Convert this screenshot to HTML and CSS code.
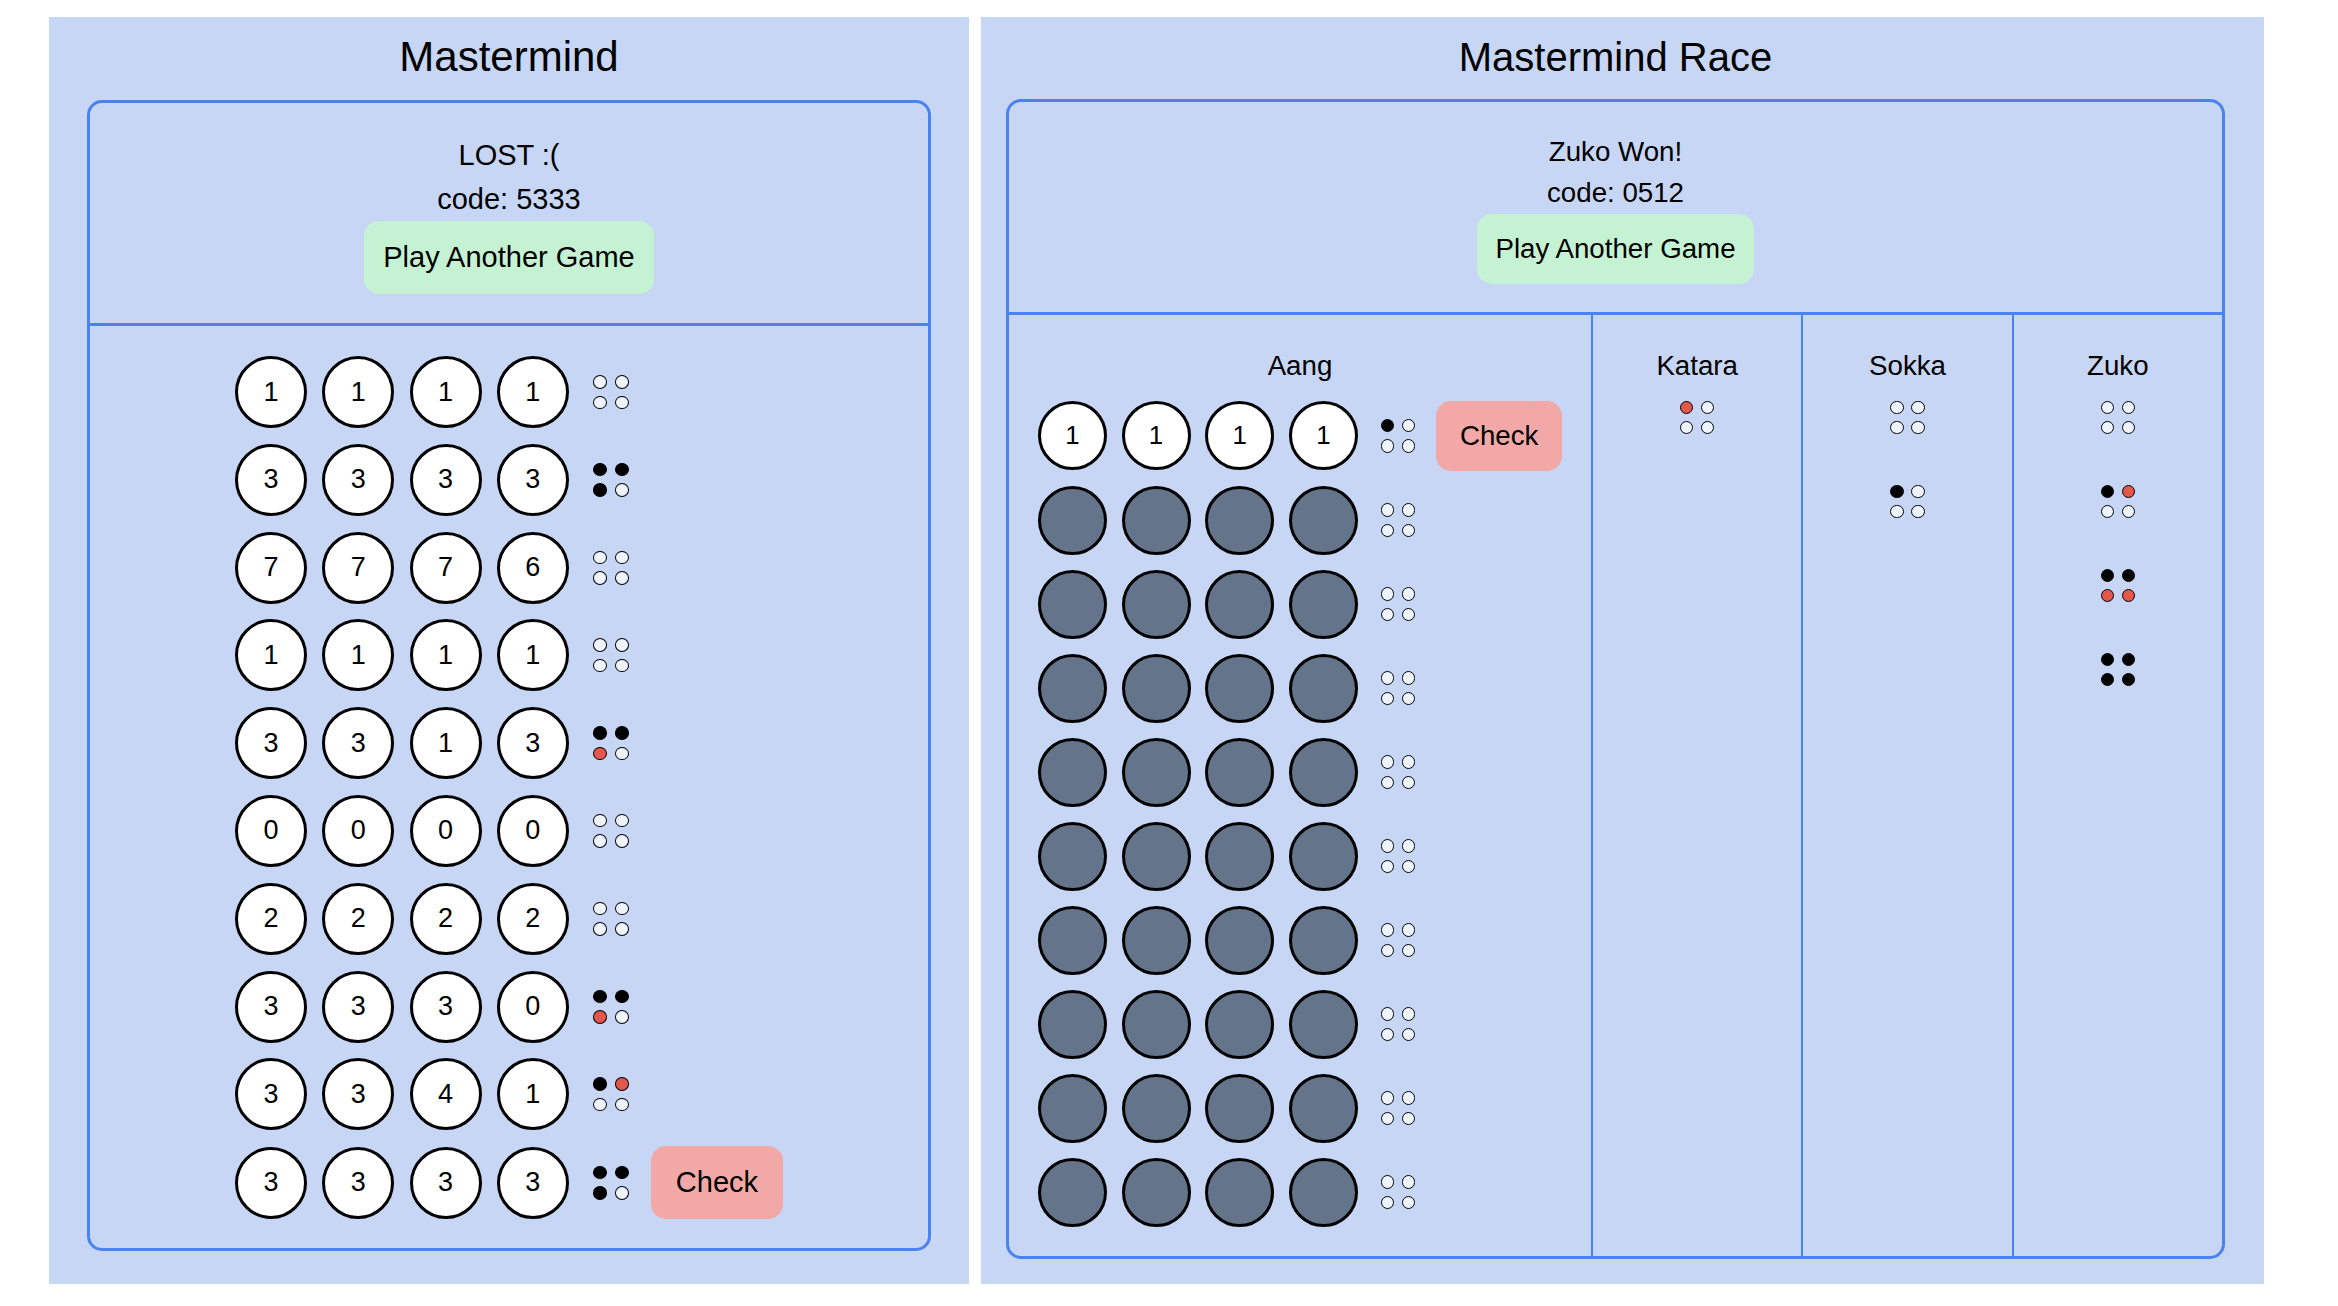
FILE: index.html
```html
<!DOCTYPE html>
<html lang="en">
<head>
<meta charset="utf-8">
<title>Mastermind</title>
<link rel="stylesheet" href="styles.css">
</head>
<body>
<div class="page">
  <section class="panel panel-left">
    <h1 class="title">Mastermind</h1>
    <div class="game">
      <div class="game-head">
        <div>LOST :(</div>
        <div>code: 5333</div>
        <button class="btn btn-green">Play Another Game</button>
      </div>
      <div class="board">
        <div class="row"><div class="pins"><span class="pin">1</span><span class="pin">1</span><span class="pin">1</span><span class="pin">1</span></div><div class="pegs"><i class="peg"></i><i class="peg"></i><i class="peg"></i><i class="peg"></i></div></div>
        <div class="row"><div class="pins"><span class="pin">3</span><span class="pin">3</span><span class="pin">3</span><span class="pin">3</span></div><div class="pegs"><i class="peg b"></i><i class="peg b"></i><i class="peg b"></i><i class="peg"></i></div></div>
        <div class="row"><div class="pins"><span class="pin">7</span><span class="pin">7</span><span class="pin">7</span><span class="pin">6</span></div><div class="pegs"><i class="peg"></i><i class="peg"></i><i class="peg"></i><i class="peg"></i></div></div>
        <div class="row"><div class="pins"><span class="pin">1</span><span class="pin">1</span><span class="pin">1</span><span class="pin">1</span></div><div class="pegs"><i class="peg"></i><i class="peg"></i><i class="peg"></i><i class="peg"></i></div></div>
        <div class="row"><div class="pins"><span class="pin">3</span><span class="pin">3</span><span class="pin">1</span><span class="pin">3</span></div><div class="pegs"><i class="peg b"></i><i class="peg b"></i><i class="peg r"></i><i class="peg"></i></div></div>
        <div class="row"><div class="pins"><span class="pin">0</span><span class="pin">0</span><span class="pin">0</span><span class="pin">0</span></div><div class="pegs"><i class="peg"></i><i class="peg"></i><i class="peg"></i><i class="peg"></i></div></div>
        <div class="row"><div class="pins"><span class="pin">2</span><span class="pin">2</span><span class="pin">2</span><span class="pin">2</span></div><div class="pegs"><i class="peg"></i><i class="peg"></i><i class="peg"></i><i class="peg"></i></div></div>
        <div class="row"><div class="pins"><span class="pin">3</span><span class="pin">3</span><span class="pin">3</span><span class="pin">0</span></div><div class="pegs"><i class="peg b"></i><i class="peg b"></i><i class="peg r"></i><i class="peg"></i></div></div>
        <div class="row"><div class="pins"><span class="pin">3</span><span class="pin">3</span><span class="pin">4</span><span class="pin">1</span></div><div class="pegs"><i class="peg b"></i><i class="peg r"></i><i class="peg"></i><i class="peg"></i></div></div>
        <div class="row"><div class="pins"><span class="pin">3</span><span class="pin">3</span><span class="pin">3</span><span class="pin">3</span></div><div class="pegs"><i class="peg b"></i><i class="peg b"></i><i class="peg b"></i><i class="peg"></i></div><button class="btn btn-red check">Check</button></div>
      </div>
    </div>
  </section>

  <section class="panel panel-right">
    <h1 class="title">Mastermind Race</h1>
    <div class="game">
      <div class="game-head">
        <div>Zuko Won!</div>
        <div>code: 0512</div>
        <button class="btn btn-green">Play Another Game</button>
      </div>
      <div class="cols">
        <div class="col col-main">
          <div class="name">Aang</div>
          <div class="board">
            <div class="row"><div class="pins"><span class="pin">1</span><span class="pin">1</span><span class="pin">1</span><span class="pin">1</span></div><div class="pegs"><i class="peg b"></i><i class="peg"></i><i class="peg"></i><i class="peg"></i></div><button class="btn btn-red check">Check</button></div>
            <div class="row"><div class="pins"><span class="pin e"></span><span class="pin e"></span><span class="pin e"></span><span class="pin e"></span></div><div class="pegs"><i class="peg"></i><i class="peg"></i><i class="peg"></i><i class="peg"></i></div></div>
            <div class="row"><div class="pins"><span class="pin e"></span><span class="pin e"></span><span class="pin e"></span><span class="pin e"></span></div><div class="pegs"><i class="peg"></i><i class="peg"></i><i class="peg"></i><i class="peg"></i></div></div>
            <div class="row"><div class="pins"><span class="pin e"></span><span class="pin e"></span><span class="pin e"></span><span class="pin e"></span></div><div class="pegs"><i class="peg"></i><i class="peg"></i><i class="peg"></i><i class="peg"></i></div></div>
            <div class="row"><div class="pins"><span class="pin e"></span><span class="pin e"></span><span class="pin e"></span><span class="pin e"></span></div><div class="pegs"><i class="peg"></i><i class="peg"></i><i class="peg"></i><i class="peg"></i></div></div>
            <div class="row"><div class="pins"><span class="pin e"></span><span class="pin e"></span><span class="pin e"></span><span class="pin e"></span></div><div class="pegs"><i class="peg"></i><i class="peg"></i><i class="peg"></i><i class="peg"></i></div></div>
            <div class="row"><div class="pins"><span class="pin e"></span><span class="pin e"></span><span class="pin e"></span><span class="pin e"></span></div><div class="pegs"><i class="peg"></i><i class="peg"></i><i class="peg"></i><i class="peg"></i></div></div>
            <div class="row"><div class="pins"><span class="pin e"></span><span class="pin e"></span><span class="pin e"></span><span class="pin e"></span></div><div class="pegs"><i class="peg"></i><i class="peg"></i><i class="peg"></i><i class="peg"></i></div></div>
            <div class="row"><div class="pins"><span class="pin e"></span><span class="pin e"></span><span class="pin e"></span><span class="pin e"></span></div><div class="pegs"><i class="peg"></i><i class="peg"></i><i class="peg"></i><i class="peg"></i></div></div>
            <div class="row"><div class="pins"><span class="pin e"></span><span class="pin e"></span><span class="pin e"></span><span class="pin e"></span></div><div class="pegs"><i class="peg"></i><i class="peg"></i><i class="peg"></i><i class="peg"></i></div></div>
          </div>
        </div>
        <div class="col">
          <div class="name">Katara</div>
          <div class="plist">
            <div class="prow"><div class="pegs"><i class="peg r"></i><i class="peg"></i><i class="peg"></i><i class="peg"></i></div></div>
          </div>
        </div>
        <div class="col">
          <div class="name">Sokka</div>
          <div class="plist">
            <div class="prow"><div class="pegs"><i class="peg"></i><i class="peg"></i><i class="peg"></i><i class="peg"></i></div></div>
            <div class="prow"><div class="pegs"><i class="peg b"></i><i class="peg"></i><i class="peg"></i><i class="peg"></i></div></div>
          </div>
        </div>
        <div class="col">
          <div class="name">Zuko</div>
          <div class="plist">
            <div class="prow"><div class="pegs"><i class="peg"></i><i class="peg"></i><i class="peg"></i><i class="peg"></i></div></div>
            <div class="prow"><div class="pegs"><i class="peg b"></i><i class="peg r"></i><i class="peg"></i><i class="peg"></i></div></div>
            <div class="prow"><div class="pegs"><i class="peg b"></i><i class="peg b"></i><i class="peg r"></i><i class="peg r"></i></div></div>
            <div class="prow"><div class="pegs"><i class="peg b"></i><i class="peg b"></i><i class="peg b"></i><i class="peg b"></i></div></div>
          </div>
        </div>
      </div>
    </div>
  </section>
</div>
</body>
</html>
```
FILE: styles.css
```css
* { box-sizing: border-box; }

html, body {
  margin: 0;
  background: #ffffff;
}

body {
  font-family: "Liberation Sans", Arial, sans-serif;
  color: #000;
}

.page {
  display: flex;
  align-items: stretch;
  gap: 12px;
  padding: 17px 0 0 49px;
}

.panel {
  background: #c7d6f4;
}

.title {
  margin: 0;
  text-align: center;
  font-weight: 400;
}

.game {
  border: 3px solid #4a82ef;
  border-radius: 15px;
}

.game-head {
  text-align: center;
  border-bottom: 3px solid #4a82ef;
}

.btn {
  display: block;
  width: fit-content;
  margin: 0 auto;
  border: none;
  font-family: inherit;
  color: #000;
  border-radius: 15px;
}

.btn-green { background: #c6f2d4; }
.btn-red { background: #f1a8a6; }

.row {
  display: flex;
  align-items: center;
}

.pins {
  display: flex;
}

.pin {
  display: flex;
  align-items: center;
  justify-content: center;
  border: 3.4px solid #000;
  border-radius: 50%;
  background: #fff;
}

.pin.e { background: #64748b; }

.pegs {
  display: grid;
  grid-template-columns: auto auto;
}

.peg {
  display: block;
  border: 1.6px solid #000;
  border-radius: 50%;
  background: #eef3fc;
}

.peg.b { background: #000; }
.peg.r { background: #e3574c; }

.check { margin: 0; }

/* ---------- left panel ---------- */
.panel-left {
  width: 920px;
  padding: 15px 38px 32px;
}

.panel-left .title {
  font-size: 42px;
  line-height: 50px;
  margin-bottom: 18px;
}

.panel-left .game-head {
  font-size: 29px;
  line-height: 43.5px;
  padding: 31px 0 29px;
}

.panel-left .btn {
  font-size: 29px;
  line-height: 33px;
  padding: 20px 19.5px;
}

.panel-left .board {
  width: fit-content;
  margin: 0 auto;
  padding: 30px 0 29px;
  display: flex;
  flex-direction: column;
  gap: 15.8px;
}

.panel-left .pins { gap: 15.3px; }

.panel-left .pin {
  width: 72px;
  height: 72px;
  font-size: 27px;
}

.panel-left .pegs {
  margin-left: 24px;
  column-gap: 8px;
  row-gap: 7px;
}

.panel-left .peg {
  width: 14px;
  height: 13.5px;
}

.panel-left .check {
  margin-left: 22px;
  padding: 20px 25px;
}

/* ---------- right panel ---------- */
.panel-right {
  width: 1283px;
  padding: 16px 39px 25px 25px;
}

.panel-right .title {
  font-size: 40px;
  line-height: 48px;
  margin-bottom: 18px;
}

.panel-right .game-head {
  font-size: 27.7px;
  line-height: 41.5px;
  padding: 28.6px 0 28.4px;
}

.panel-right .btn {
  font-size: 27.7px;
  line-height: 31.5px;
  padding: 19.25px 18.6px;
}

.cols {
  display: flex;
}

.col {
  flex: 1 1 0;
  border-left: 2.5px solid #4a82ef;
  padding: 29.6px 0 29.3px;
  min-width: 0;
}

.col.col-main {
  flex: 0 0 582px;
  border-left: none;
}

.name {
  text-align: center;
  font-size: 27.7px;
  line-height: 41.5px;
  margin-bottom: 14.6px;
}

.panel-right .board {
  width: fit-content;
  margin: 0 auto;
  display: flex;
  flex-direction: column;
  gap: 15px;
}

.panel-right .pins { gap: 14.7px; }

.panel-right .pin {
  width: 69px;
  height: 69px;
  font-size: 25.8px;
  border-width: 3.2px;
}

.panel-right .pegs {
  column-gap: 7.6px;
  row-gap: 7px;
}

.panel-right .row .pegs { margin-left: 23px; }

.panel-right .peg {
  width: 13.4px;
  height: 13.4px;
}

.panel-right .check {
  margin-left: 21px;
  font-size: 27.7px;
  line-height: 31.5px;
  padding: 19.25px 23.7px;
}

.plist {
  display: flex;
  flex-direction: column;
  gap: 15px;
}

.prow {
  height: 69px;
  display: flex;
  justify-content: center;
  align-items: flex-start;
}
```
